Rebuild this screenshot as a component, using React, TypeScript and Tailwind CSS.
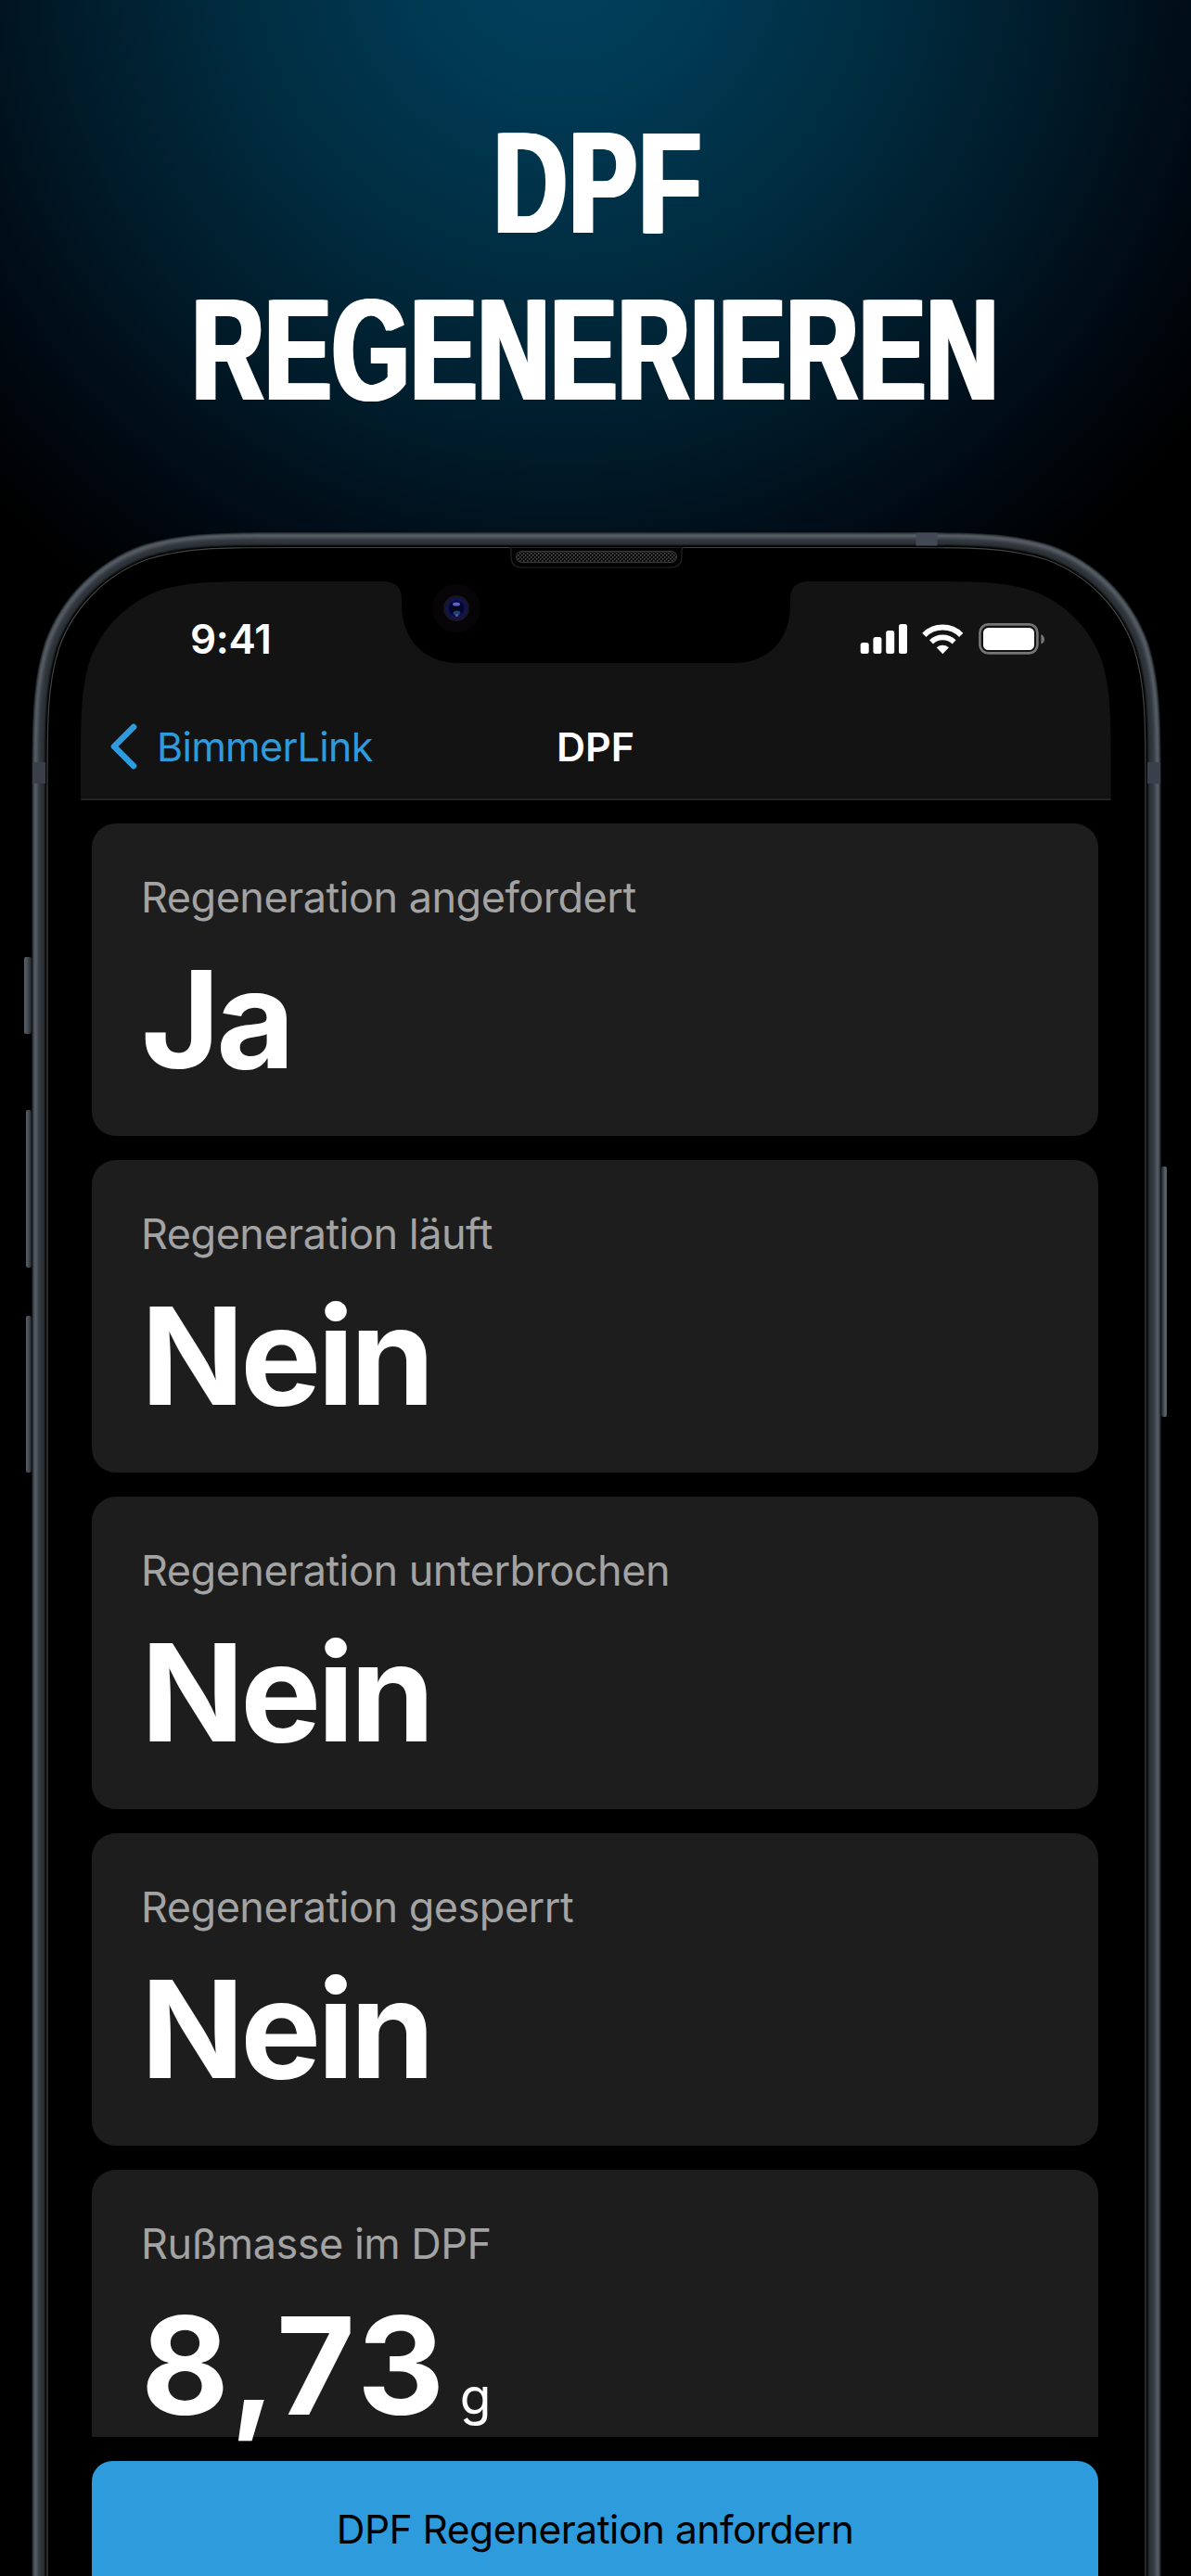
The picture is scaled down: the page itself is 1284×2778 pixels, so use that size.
const readings = [
  { label: 'Regeneration angefordert', value: 'Ja' },
  { label: 'Regeneration läuft', value: 'Nein' },
  { label: 'Regeneration unterbrochen', value: 'Nein' },
  { label: 'Regeneration gesperrt', value: 'Nein' },
  { label: 'Rußmasse im DPF', value: '8,73', unit: 'g' },
]

// Top half of a shape with continuous ("squircle") corners, open towards the bottom edge.
function topShape(x0: number, y0: number, x1: number, y1: number, r: number) {
  const l = (a: number, b: number) => `${(x0 + a * r).toFixed(2)} ${(y0 + b * r).toFixed(2)}`
  const m = (a: number, b: number) => `${(x1 - a * r).toFixed(2)} ${(y0 + b * r).toFixed(2)}`
  return [
    `M${x0} ${y1}`,
    `L${l(0, 1.5287)}`,
    `C${l(0, 1.0885)} ${l(0, 0.8684)} ${l(0.0749, 0.6315)}`,
    `C${l(0.1691, 0.3728)} ${l(0.3728, 0.1691)} ${l(0.6315, 0.0749)}`,
    `C${l(0.8684, 0)} ${l(1.0885, 0)} ${l(1.5287, 0)}`,
    `L${m(1.5287, 0)}`,
    `C${m(1.0885, 0)} ${m(0.8684, 0)} ${m(0.6315, 0.0749)}`,
    `C${m(0.3728, 0.1691)} ${m(0.1691, 0.3728)} ${m(0.0749, 0.6315)}`,
    `C${m(0, 0.8684)} ${m(0, 1.0885)} ${m(0, 1.5287)}`,
    `L${x1} ${y1}`,
  ].join(' ')
}

// Metal band, shaded from its outer to its inner edge, one shape per tone.
const bandTones = ['#23292f', '#3b4148', '#4e545b', '#565c63', '#535960', '#4a5057', '#41474e', '#393f45', '#33393f', '#30363c', '#2e343a', '#2c3238', '#282e33', '#1c2125', '#0c0e10']

function PhoneFrame() {
  return (
    <svg className="absolute inset-0" width="1284" height="2778" viewBox="0 0 1284 2778" fill="none" aria-hidden="true">
      <defs>
        <linearGradient id="left" x1="0" x2="1" y1="0" y2="0">
          <stop offset="0" stopColor="#5a6168" />
          <stop offset="0.5" stopColor="#434a51" />
          <stop offset="1" stopColor="#1c2228" />
        </linearGradient>
        <linearGradient id="right" x1="1" x2="0" y1="0" y2="0">
          <stop offset="0" stopColor="#4a525b" />
          <stop offset="0.3" stopColor="#5c646e" />
          <stop offset="1" stopColor="#1f252c" />
        </linearGradient>
        <pattern id="mesh" width="4" height="4" patternUnits="userSpaceOnUse">
          <rect width="4" height="4" fill="#0a0a0a" />
          <rect width="1.6" height="1.6" fill="#4a4a4a" />
          <rect x="2" y="2" width="1.6" height="1.6" fill="#4a4a4a" />
        </pattern>
        <radialGradient id="lens">
          <stop offset="0" stopColor="#04041a" />
          <stop offset="0.5" stopColor="#06062c" />
          <stop offset="0.7" stopColor="#11125e" />
          <stop offset="0.78" stopColor="#16172f" />
          <stop offset="1" stopColor="#15151f" />
        </radialGradient>
      </defs>

      {/* side buttons */}
      <rect x="26" y="1032" width="8" height="83" rx="2" fill="url(#left)" />
      <rect x="28" y="1197" width="6" height="170" rx="2" fill="url(#left)" />
      <rect x="28" y="1419" width="6" height="169" rx="2" fill="url(#left)" />
      <rect x="1252" y="1258" width="6" height="270" rx="2" fill="url(#right)" />

      {/* metal band, bezel and glass edge */}
      {bandTones.map((tone, i) => (
        <path key={i} d={topShape(34.5 + i, 574 + i, 1251.5 - i, 2790, 187 - i)} fill={tone} />
      ))}
      <path d={topShape(49.5, 589, 1236.5, 2790, 172)} fill="#000" />
      <path d={topShape(51, 590.5, 1235, 2790, 170.5)} fill="#000" stroke="#444442" strokeWidth="1.2" />

      {/* antenna lines */}
      <rect x="987.5" y="574.5" width="23" height="14" fill="#424854" />
      <rect x="35" y="822" width="14" height="23" fill="#3a3f4b" />
      <rect x="1237" y="822" width="14" height="23" fill="#3a3f4b" />

      {/* status and title bar surface */}
      <path d={topShape(87, 627, 1197.5, 863, 134) + ' Z'} fill="#131313" />
      <rect x="87" y="861.5" width="1110.5" height="1.5" fill="#2a2a2a" />

      {/* notch */}
      <path
        d="M417 626 V627.5 Q433 629 433 646 V652 C433 690 458 715 494 715 H792 C828 715 852 690 852 652 V646 Q852 629 868 627.5 V626 Z"
        fill="#000"
      />
      <path
        d="M549 590.5 Q551 591 551 594 V600 Q551 612 563 612 H722 Q735 612 735 600 V594 Q735 591 737 590.5"
        fill="#020202"
        stroke="#242424"
        strokeWidth="1.2"
      />
      <rect x="556.5" y="594.5" width="173" height="12" rx="6" fill="url(#mesh)" stroke="#3c3c3c" strokeWidth="1" />
      <circle cx="492" cy="656" r="26" fill="#070408" />
      <circle cx="492" cy="656" r="14" fill="url(#lens)" />
      <ellipse cx="492" cy="651.5" rx="4" ry="2" fill="#5d61c4" />
      <ellipse cx="492.5" cy="661" rx="4" ry="2.5" fill="#124a66" />
      <circle cx="492.5" cy="663.5" r="1.6" fill="#7a45b4" />
    </svg>
  )
}

function StatusIcons() {
  return (
    <svg width="200" height="36" viewBox="0 0 200 36" fill="none" aria-hidden="true">
      <g fill="#fff">
        <rect x="1.7" y="22" width="9" height="12" rx="2.5" />
        <rect x="15.4" y="16" width="9" height="18" rx="2.5" />
        <rect x="29.2" y="9" width="9" height="25" rx="2.5" />
        <rect x="43" y="2" width="9" height="32" rx="2.5" />
        <path d="M83.7 27.2 Q90.3 22.4 96.9 27.2 L90.3 34.2 Z" />
      </g>
      <path d="M78 21.4 A17.6 17.6 0 0 1 102.6 21.4" stroke="#fff" strokeWidth="5.8" />
      <path d="M70.4 13.8 A28.2 28.2 0 0 1 110.2 13.8" stroke="#fff" strokeWidth="6" />
      <rect x="130.4" y="2.4" width="62" height="31" rx="9" stroke="#767676" strokeWidth="2.6" />
      <rect x="134" y="6" width="55" height="24" rx="5.5" fill="#fff" />
      <path d="M196.4 13 Q200 15 200 18.5 Q200 22 196.4 23.5 Z" fill="#767676" />
    </svg>
  )
}

export default function App() {
  return (
    <div className="relative flex h-[2778px] w-[1284px] flex-col overflow-hidden bg-black bg-[radial-gradient(ellipse_850px_860px_at_605px_-60px,#00425f_0%,#003a54_18%,#002c40_42%,#001a28_65%,#000a14_83%,#000_100%)] font-['Inter','Liberation_Sans',sans-serif] text-white">
      <PhoneFrame />

      <h1 className="flex h-[627px] shrink-0 flex-col items-center pt-[107px] font-['Liberation_Sans',Arial,sans-serif] text-[156.5px] leading-[180px] font-bold whitespace-nowrap">
        <span className="ml-[5px] scale-x-[0.7] tracking-[3px] [text-shadow:4px_0_0_#fff,-4px_0_0_#fff,2px_0_0_#fff,-2px_0_0_#fff]">DPF</span>
        <span className="scale-x-[0.685] tracking-[1.5px] [text-shadow:4px_0_0_#fff,-4px_0_0_#fff,2px_0_0_#fff,-2px_0_0_#fff]">REGENERIEREN</span>
      </h1>

      <div className="relative mx-[87px] flex flex-1 flex-col">
        <header className="flex h-[236px] shrink-0 flex-col">
          <div className="flex h-[124px] items-center justify-between pr-[71px] pl-[118px]">
            <span className="text-[44px] font-semibold tracking-[-0.3px]">9:41</span>
            <StatusIcons />
          </div>
          <nav className="grid flex-1 grid-cols-[1fr_auto_1fr] items-start pt-[28px]">
            <a className="flex h-[52px] items-center gap-[21px] pl-[32px] text-[#2d9bdc]">
              <svg width="29" height="50" viewBox="0 0 29 50" fill="none" aria-hidden="true">
                <path d="M25 4 L4 25 L25 46" stroke="currentColor" strokeWidth="6.6" strokeLinecap="round" strokeLinejoin="round" />
              </svg>
              <span className="text-[43px] leading-[52px] tracking-[-0.7px]">BimmerLink</span>
            </a>
            <span className="text-[43px] leading-[52px] font-semibold">DPF</span>
          </nav>
        </header>

        <main className="mt-[25px] flex h-[1740px] shrink-0 flex-col gap-[26px] pr-[13px] pl-3">
          {readings.map((r) => (
            <section
              key={r.label}
              className="h-[337px] shrink-0 rounded-[26px] bg-[#1d1d1d] pt-[53px] pl-[53px] last:h-[288px] last:rounded-b-none"
            >
              <p className="text-[45px] leading-[54px] tracking-[-0.5px] text-[#a3a3a3]">{r.label}</p>
              <p
                className={`mt-[19px] flex items-baseline text-[146px] leading-[170px] font-bold ${
                  r.unit ? 'tracking-[4.5px]' : 'tracking-[-4px]'
                }`}
              >
                {r.value}
                {r.unit && <span className="ml-[12px] text-[55px] leading-none font-normal tracking-normal">{r.unit}</span>}
              </p>
            </section>
          ))}
        </main>

        <div className="mt-[26px] pr-[13px] pl-3">
          <button className="h-[148px] w-full rounded-[22px] bg-[#2e9bdc] text-[42.5px] tracking-[-0.5px] text-black">
            DPF Regeneration anfordern
          </button>
        </div>
      </div>
    </div>
  )
}
